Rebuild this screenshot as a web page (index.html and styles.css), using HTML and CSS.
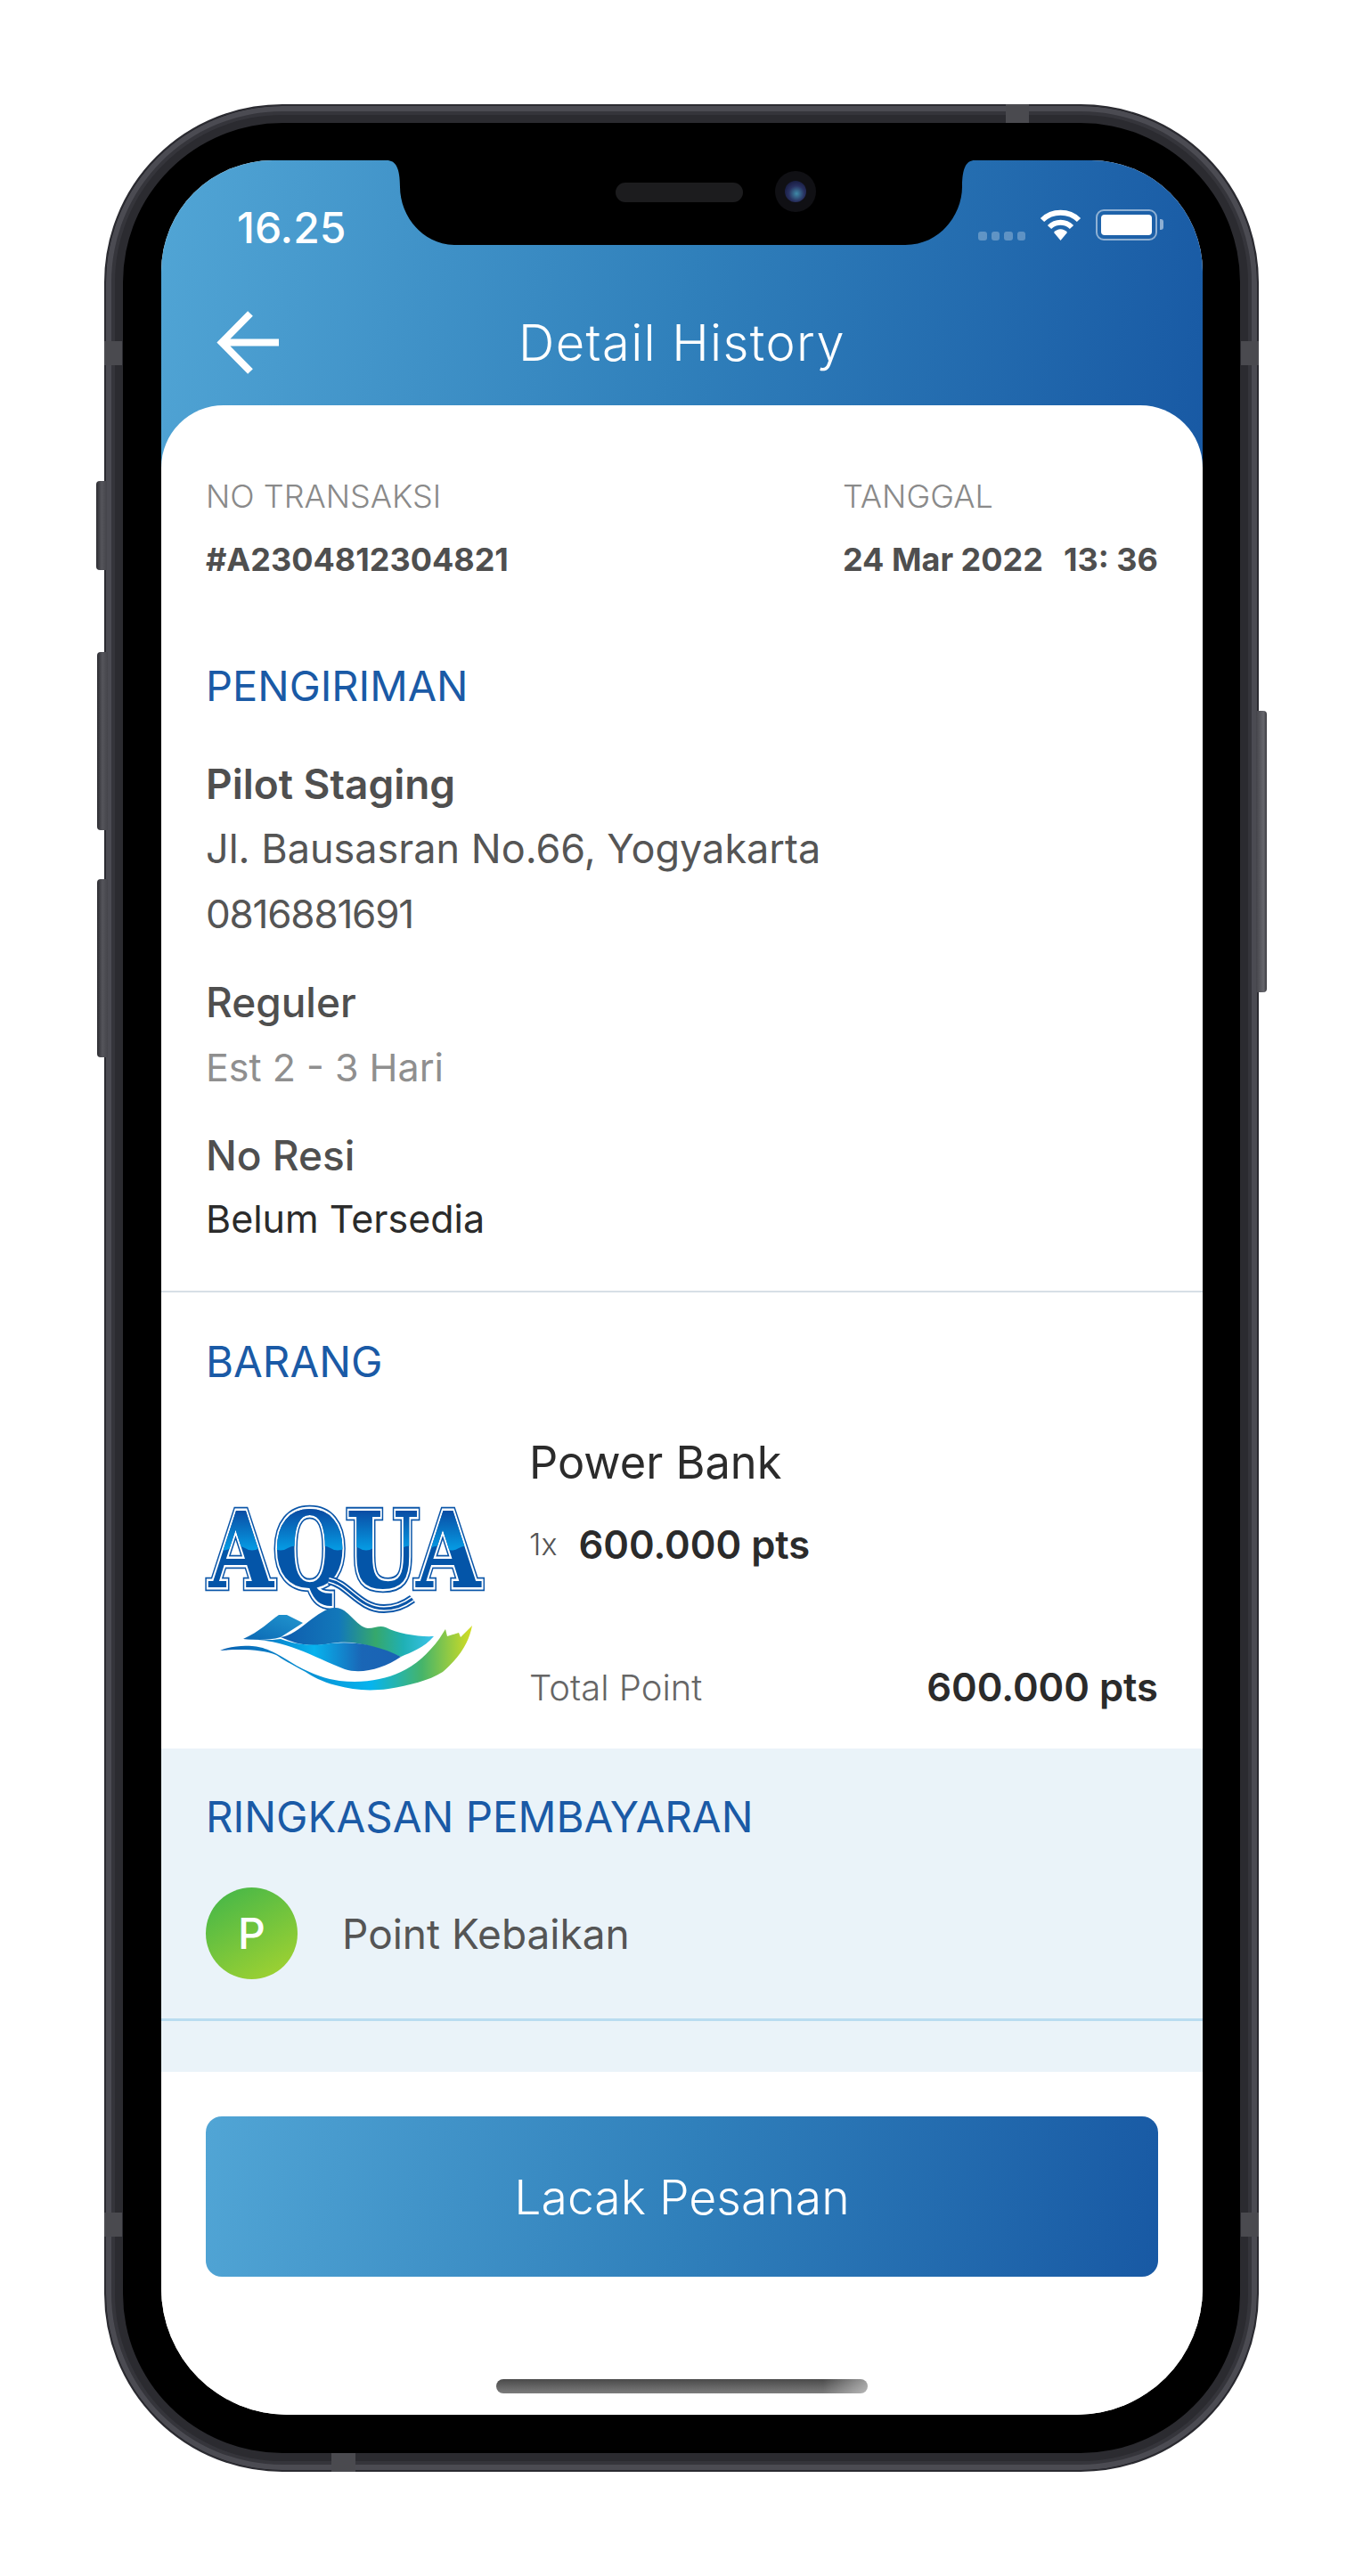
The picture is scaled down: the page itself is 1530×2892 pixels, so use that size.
FILE: index.html
```html
<!DOCTYPE html>
<html lang="en">
<head>
    <meta charset="UTF-8">
    <title>Detail History</title>
    <link rel="stylesheet" href="styles.css">
</head>
<body>
    <div class="device">
        <i class="sideBtn mute"></i>
        <i class="sideBtn volUp"></i>
        <i class="sideBtn volDown"></i>
        <i class="sideBtn power"></i>
        <i class="band bandTop"></i>
        <i class="band bandBottom"></i>
        <i class="band bandLeftTop"></i>
        <i class="band bandLeftBottom"></i>
        <i class="band bandRightTop"></i>
        <i class="band bandRightBottom"></i>

        <div class="screen">
            <svg class="notch" width="660" height="96" viewBox="0 0 660 96">
                <path d="M0 0C10 0 15 8 15 30C15 60 38 95 78 95H582C622 95 646 60 646 30C646 8 651 0 660 0Z" fill="#000"/>
            </svg>
            <div class="speaker"></div>
            <div class="camera"><span></span></div>

            <header class="header">
                <div class="statusBar">
                    <span class="time">16.25</span>
                    <div class="statusIcons">
                        <div class="signal"><i></i><i></i><i></i><i></i></div>
                        <svg class="wifi" width="47" height="35" viewBox="0 0 47 35">
                            <path d="M3 12C14 1 33 1 44 12" fill="none" stroke="#fff" stroke-width="6"/>
                            <path d="M11 20C18 13 29 13 36 20" fill="none" stroke="#fff" stroke-width="6"/>
                            <path d="M16 26C20 21 27 21 31 26L23.500 35Z" fill="#fff"/>
                        </svg>
                        <div class="battery"><span></span></div>
                        <i class="batteryNub"></i>
                    </div>
                </div>
                <div class="navBar">
                    <svg class="back" width="72" height="72" viewBox="0 0 72 72">
                        <path d="M70 35.500H6M38 3L6 35.500L38 68" fill="none" stroke="#fff" stroke-width="8"/>
                    </svg>
                    <h1>Detail History</h1>
                </div>
            </header>

            <main class="card">
                <section class="transInfo">
                    <div class="transRow">
                        <div class="transNo">
                            <p class="label">NO TRANSAKSI</p>
                            <p class="value">#A2304812304821</p>
                        </div>
                        <div class="transDate">
                            <p class="label">TANGGAL</p>
                            <p class="value"><span>24 Mar 2022</span><span>13: 36</span></p>
                        </div>
                    </div>
                    <h2 class="heading shipHeading">PENGIRIMAN</h2>
                    <p class="strong">Pilot Staging</p>
                    <p class="line">Jl. Bausasran No.66, Yogyakarta</p>
                    <p class="line phone">0816881691</p>
                    <p class="sub">Reguler</p>
                    <p class="line muted">Est 2 - 3 Hari</p>
                    <p class="sub">No Resi</p>
                    <p class="resi">Belum Tersedia</p>
                </section>

                <section class="goods">
                    <h2 class="heading">BARANG</h2>
                    <div class="goodsRow">
                        <svg class="logo" width="316" height="215" viewBox="0 0 316 215">
                            <defs>
                                <linearGradient id="aquaTop" gradientUnits="userSpaceOnUse" x1="0" y1="-88" x2="0" y2="-36">
                                    <stop offset="0" stop-color="#0a4fa6"/>
                                    <stop offset="1" stop-color="#04a9ef"/>
                                </linearGradient>
                                <linearGradient id="backHill" x1="0" y1="1" x2="1" y2="0">
                                    <stop offset="0" stop-color="#0b68b4"/>
                                    <stop offset="1" stop-color="#2196cf"/>
                                </linearGradient>
                                <linearGradient id="hill" x1="0" y1="0" x2="1" y2="0">
                                    <stop offset="0" stop-color="#0f5cae"/>
                                    <stop offset=".38" stop-color="#1278ba"/>
                                    <stop offset=".62" stop-color="#36a86c"/>
                                    <stop offset=".8" stop-color="#1fb0b4"/>
                                    <stop offset="1" stop-color="#3cc4ea"/>
                                </linearGradient>
                                <linearGradient id="band" x1="0" y1="0" x2="1" y2="0">
                                    <stop offset="0" stop-color="#0a62b4"/>
                                    <stop offset=".45" stop-color="#07b3ee"/>
                                    <stop offset=".75" stop-color="#1a66b6"/>
                                    <stop offset="1" stop-color="#1a62b4"/>
                                </linearGradient>
                                <linearGradient id="wave" x1="0" y1="0" x2="1" y2="0">
                                    <stop offset="0" stop-color="#0a60b0"/>
                                    <stop offset=".6" stop-color="#06b4ee"/>
                                    <stop offset=".8" stop-color="#45b46a"/>
                                    <stop offset="1" stop-color="#d4dd22"/>
                                </linearGradient>
                                <clipPath id="aquaUpper">
                                    <path d="M0 0H316V48q-8 5 -16 0t-16 0t-16 0t-16 0t-16 0t-16 0t-16 0t-16 0t-16 0t-16 0t-16 0t-16 0t-16 0t-16 0t-16 0t-16 0t-16 0t-16 0t-16 0t-12 0Z"/>
                                </clipPath>
                                <text id="aquaWord" class="aquaWord" transform="translate(156 92) scale(.76 .96)">AQUA</text>
                            </defs>
                            <use href="#aquaWord" class="aquaOuter"/>
                            <use href="#aquaWord" class="aquaInner"/>
                            <use href="#aquaWord" class="aquaFill"/>
                            <use href="#aquaWord" class="aquaSky" clip-path="url(#aquaUpper)"/>
                            <path d="M138 84C160 88 172 116 200 116C214 116 224 111 232 105" fill="none" stroke="#0a55a8" stroke-width="10"/>
                            <path d="M138 84C160 88 172 116 200 116C214 116 224 111 232 105" fill="none" stroke="#fff" stroke-width="6"/>
                            <path d="M138 84C160 88 172 116 200 116C214 116 224 111 232 105" fill="none" stroke="#0a55a8" stroke-width="3"/>
                            <path d="M42 150C60 142 72 130 82 123L91 123L109 132L84 148C70 152 55 151 42 150Z" fill="url(#backHill)"/>
                            <path d="M84 148C105 146 125 115 146 115C160 115 168 136 182 138C190 138 195 134 202 137C215 144 240 148 256 147C245 160 230 165 219 170C190 160 170 150 140 155C115 160 100 155 84 148Z" fill="url(#hill)"/>
                            <path d="M42 150C90 150 120 170 156 184C175 190 200 183 219 170C195 158 170 152 140 155C110 160 90 152 84 150C70 152 55 151 42 150Z" fill="url(#band)"/>
                            <path d="M16 163C28 158 42 157 52 158C65 159 75 163 102 180C120 190 136 195 150 197C176 200 200 196 219 187C235 180 250 166 262 150L269 139L271 147L284 143L286 148L299 135C296 150 289 167 266 187C250 197 229 202 205 206C182 209 165 207 146 202C130 198 120 192 112 187C95 178 85 172 79 168C65 162 40 161 16 163Z" fill="url(#wave)"/>
                        </svg>
                        <div class="goodsInfo">
                            <p class="goodsName">Power Bank</p>
                            <p class="goodsQty"><span>1x</span><b>600.000 pts</b></p>
                            <div class="goodsTotal">
                                <span>Total Point</span>
                                <b>600.000 pts</b>
                            </div>
                        </div>
                    </div>
                </section>

                <section class="summary">
                    <h2 class="heading">RINGKASAN PEMBAYARAN</h2>
                    <div class="payRow">
                        <div class="payIcon">P</div>
                        <span>Point Kebaikan</span>
                    </div>
                    <div class="summaryFoot"></div>
                </section>

                <div class="action">
                    <button class="trackBtn">Lacak Pesanan</button>
                </div>
                <div class="homeBar"></div>
            </main>
        </div>
    </div>
</body>
</html>
```

FILE: styles.css
```css
*{box-sizing:border-box;}
html,body{margin:0;padding:0;background:#fff;}
body{width:1530px;height:2892px;padding:117px 0 0 117px;font-family:"Inter","Liberation Sans",sans-serif;color:#4f4f4f;}
p,h1,h2{margin:0;font-weight:400;}

/* phone body */
.device{position:relative;width:1296px;height:2658px;padding:21px 20px;border-radius:200px;background:#000;border:2px solid #2b2b31;box-shadow:inset 0 0 0 6px #4b4b52,inset 0 0 0 10px #35353b,inset 0 0 0 19px #2b2b30;}
.sideBtn{position:absolute;width:12px;background:linear-gradient(90deg,#2c2c31,#55555b 50%,#44444a);border-radius:4px 0 0 4px;}
.mute{left:-11px;top:421px;height:100px;}
.volUp{left:-10px;top:613px;height:200px;}
.volDown{left:-10px;top:868px;height:200px;}
.power{right:-11px;top:679px;height:316px;border-radius:0 4px 4px 0;background:linear-gradient(90deg,#44444a,#66666c 70%,#3b3b40);}
.band{position:absolute;background:#4a4a4f;}
.bandTop{top:-2px;left:1010px;width:26px;height:21px;}
.bandBottom{bottom:-2px;left:253px;width:27px;height:21px;}
.bandLeftTop{left:-2px;top:264px;width:20px;height:27px;}
.bandLeftBottom{left:-2px;top:2365px;width:20px;height:27px;}
.bandRightTop{right:-2px;top:264px;width:20px;height:27px;}
.bandRightBottom{right:-2px;top:2365px;width:20px;height:27px;}

/* screen */
.screen{position:relative;margin:40px 41px 0 42px;height:2531px;border-radius:125px 125px 142px 142px;overflow:hidden;background:#fff;}
.notch{position:absolute;left:253px;top:0;z-index:2;}
.speaker{position:absolute;left:510px;top:25px;width:143px;height:22px;border-radius:11px;background:#1c1c1e;z-index:3;}
.camera{position:absolute;left:689px;top:12px;width:46px;height:46px;border-radius:50%;background:#101014;z-index:3;display:flex;align-items:center;justify-content:center;}
.camera span{width:24px;height:24px;border-radius:50%;background:radial-gradient(circle at 55% 60%,#3f8aa8 0,#28305f 45%,#0a0c28 100%);}

/* header */
.header{height:360px;background:linear-gradient(100deg,#51a5d5 0%,#3080bb 50%,#1859a4 100%);color:#fff;}
.statusBar{display:flex;justify-content:space-between;align-items:flex-start;padding:49px 44px 0 85px;height:149px;}
.time{font-size:48px;font-weight:500;line-height:54px;}
.statusIcons{display:flex;align-items:flex-start;padding-top:6px;}
.signal{display:flex;gap:5px;margin-top:25px;margin-right:16px;}
.signal i{width:9.500px;height:9.500px;border-radius:3px;background:rgba(255,255,255,.28);}
.wifi{margin-right:16px;}
.battery{width:69px;height:35px;padding:4px;border:2px solid rgba(255,255,255,.5);border-radius:9px;}
.battery span{display:block;width:100%;height:100%;background:#fff;border-radius:4px;}
.batteryNub{width:4px;height:12px;margin:11px 0 0 3px;background:rgba(255,255,255,.5);border-radius:0 3px 3px 0;}
.navBar{position:relative;display:flex;align-items:center;justify-content:center;height:112px;}
.back{position:absolute;left:62px;top:20px;}
.navBar h1{font-size:56px;font-weight:300;line-height:64px;letter-spacing:1.4px;}

/* content card */
.card{margin-top:-85px;position:relative;background:#fff;border-radius:70px 70px 0 0;height:2256px;}
.transInfo{padding:80px 50px 0;height:996px;border-bottom:2px solid #d7dfe6;}
.transRow{display:flex;justify-content:space-between;}
.transDate{width:354px;}
.label{font-size:36px;line-height:44px;color:#8a8a8a;font-weight:300;}
.value{margin-top:27px;font-size:36px;line-height:44px;font-weight:700;color:#4f4f4f;display:flex;justify-content:space-between;}
.heading{font-size:47.500px;line-height:56px;font-weight:400;color:#1a5aa6;}
.shipHeading{margin-top:92px;font-size:47px;}
.strong{margin-top:54px;font-size:46px;line-height:56px;font-weight:600;color:#4f4f4f;}
.sub{margin-top:43px;font-size:46px;line-height:56px;font-weight:500;color:#4f4f4f;}
.line{margin-top:17px;font-size:45px;line-height:56px;color:#555;font-weight:400;}
.phone{font-size:44px;letter-spacing:-1.2px;}
.muted{font-size:43px;color:#8f8f8f;}
.resi{margin-top:15px;font-size:43px;line-height:56px;color:#2b2b2b;}
.goods{padding:50px 50px 0;height:512px;}
.goodsRow{display:flex;margin-top:55px;}
.logo{flex:none;margin-top:78px;overflow:visible;}
.goodsInfo{flex:1;margin-left:47px;}
.goodsName{font-size:50.500px;line-height:60px;color:#2b2b2b;}
.goodsQty{margin-top:32px;font-size:43.500px;line-height:60px;color:#2b2b2b;display:flex;align-items:center;gap:24px;}
.goodsQty span{font-size:34px;font-weight:300;color:#555;}
.goodsQty b{font-weight:600;}
.goodsTotal{margin-top:100px;display:flex;justify-content:space-between;align-items:center;height:60px;}
.goodsTotal span{font-size:40px;color:#666;font-weight:300;}
.goodsTotal b{font-size:43.500px;font-weight:600;color:#2b2b2b;}

/* logo word, drawn in layers through use */
.aquaWord{font-family:"DejaVu Serif","Liberation Serif",serif;font-weight:700;font-size:123px;text-anchor:middle;}
.aquaOuter{fill:#0a55a8;stroke:#0a55a8;stroke-width:9;}
.aquaInner{fill:#fff;stroke:#fff;stroke-width:5;}
.aquaFill{fill:#0455a8;stroke:none;}
.aquaSky{fill:url(#aquaTop);stroke:none;}

/* summary */
.summary{background:#eaf3f9;height:363px;padding:49px 50px 0;}
.payRow{display:flex;align-items:center;gap:50px;margin-top:51px;height:103px;font-size:46px;color:#555;}
.payIcon{width:103px;height:103px;border-radius:50%;background:linear-gradient(150deg,#3fb54a,#a8d42f);display:flex;align-items:center;justify-content:center;color:#fff;font-size:48px;font-weight:500;}
.summaryFoot{margin:44px -50px 0;height:3px;background:#b9dcf0;}

/* bottom */
.action{padding:50px 50px 0;}
.trackBtn{display:block;width:100%;height:180px;border:0;border-radius:18px;background:linear-gradient(100deg,#51a5d5 0%,#3080bb 50%,#1859a4 100%);color:#fff;font-family:inherit;font-size:53.500px;font-weight:300;}
.homeBar{margin:115px auto 0;width:417px;height:16px;border-radius:8px;background:linear-gradient(90deg,transparent 88%,rgba(255,255,255,.45)),linear-gradient(180deg,#4a4a4a,#7c7c7c);}
```
